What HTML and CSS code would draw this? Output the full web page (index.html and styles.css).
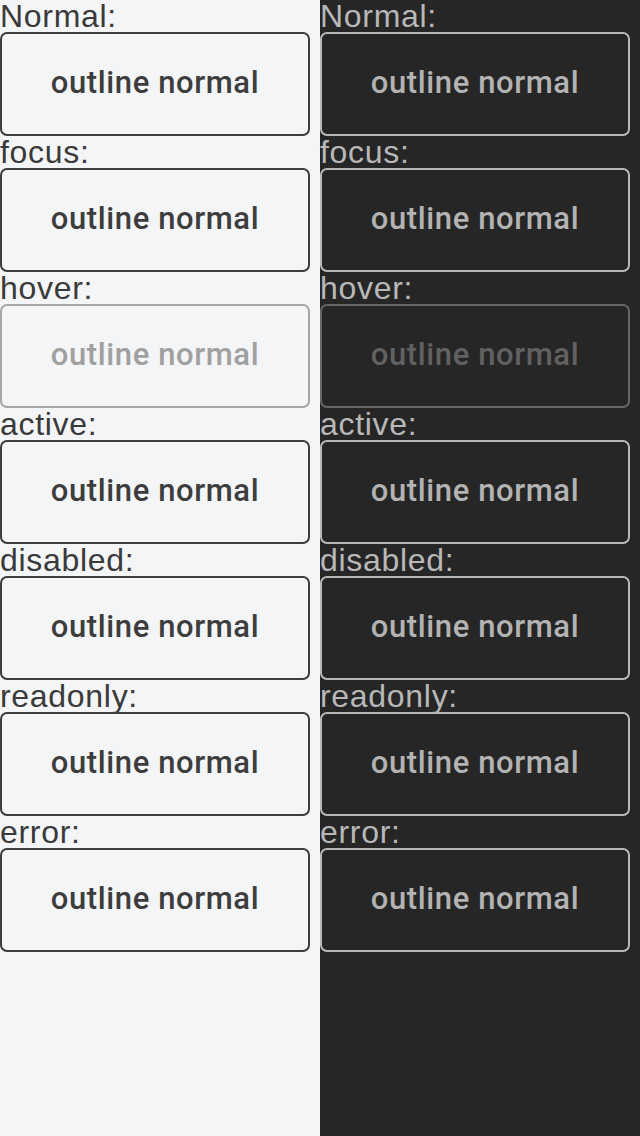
FILE: index.html
```html
<!DOCTYPE html>
<html>
<head>
<meta charset="utf-8">
<link rel="stylesheet" href="styles.css">
</head>
<body>
<div class="page">
  <div class="col light">
    <div class="label">Normal:</div>
    <div class="btn">outline normal</div>
    <div class="label">focus:</div>
    <div class="btn">outline normal</div>
    <div class="label">hover:</div>
    <div class="btn hover">outline normal</div>
    <div class="label">active:</div>
    <div class="btn">outline normal</div>
    <div class="label">disabled:</div>
    <div class="btn">outline normal</div>
    <div class="label">readonly:</div>
    <div class="btn">outline normal</div>
    <div class="label">error:</div>
    <div class="btn">outline normal</div>
  </div>
  <div class="col dark">
    <div class="label">Normal:</div>
    <div class="btn">outline normal</div>
    <div class="label">focus:</div>
    <div class="btn">outline normal</div>
    <div class="label">hover:</div>
    <div class="btn hover">outline normal</div>
    <div class="label">active:</div>
    <div class="btn">outline normal</div>
    <div class="label">disabled:</div>
    <div class="btn">outline normal</div>
    <div class="label">readonly:</div>
    <div class="btn">outline normal</div>
    <div class="label">error:</div>
    <div class="btn">outline normal</div>
  </div>
</div>
</body>
</html>
```

FILE: styles.css
```css
html, body {
  margin: 0;
  padding: 0;
}
body {
  font-family: "Liberation Sans", Arial, sans-serif;
}
.page {
  display: flex;
  width: 640px;
  height: 1136px;
}
.col {
  width: 320px;
  display: flex;
  flex-direction: column;
}
.light {
  background: #f4f5f7;
  color: #3a3a3a;
}
.dark {
  background: #262626;
  color: #b8b8b8;
}
.label {
  font-size: 32px;
  line-height: 32px;
  height: 32px;
  letter-spacing: 0.7px;
}
.btn {
  box-sizing: border-box;
  width: 310px;
  height: 104px;
  padding-bottom: 4px;
  border: 2px solid #3d3d3d;
  border-radius: 7px;
  display: flex;
  align-items: center;
  justify-content: center;
  font-family: Roboto, "Liberation Sans", sans-serif;
  font-size: 31px;
  font-weight: 500;
  letter-spacing: 0.6px;
  color: #3d3d3d;
}
.light .btn.hover {
  border-color: #a6a6a6;
  color: #a0a0a0;
}
.dark .btn {
  border-color: #b8b8b8;
  color: #b3b3b3;
}
.dark .btn.hover {
  border-color: #666666;
  color: #616161;
}
```
